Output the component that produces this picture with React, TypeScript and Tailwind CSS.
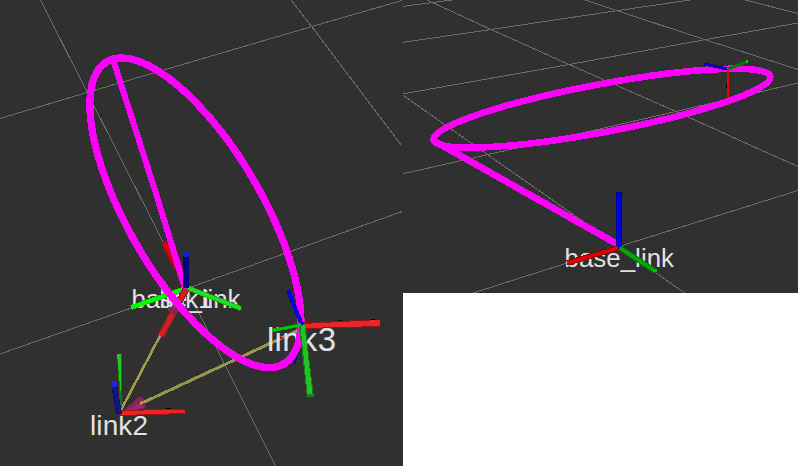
type TubeProps = {
  from: [number, number];
  to: [number, number];
  width: number;
  color: string;
  edge: string;
};

const GRID = '#6c6c6c';
const PATH = '#ff00ff';
const FONT = '"Liberation Sans", Arial, sans-serif';

function Tube({ from, to, width, color, edge }: TubeProps) {
  const line = { x1: from[0], y1: from[1], x2: to[0], y2: to[1] };
  return (
    <g>
      <line {...line} stroke={edge} strokeWidth={width} />
      <line {...line} stroke={color} strokeWidth={width * 0.62} />
    </g>
  );
}

function Label({ x, y, size, length, children }: { x: number; y: number; size: number; length: number; children: string }) {
  return (
    <text x={x} y={y} fontSize={size} textLength={length} fontFamily={FONT} fill="#e2e2e2">
      {children}
    </text>
  );
}

function TopView() {
  return (
    <svg className="block" width="403" height="466" viewBox="0 0 403 466" shapeRendering="crispEdges" fill="none">
      <g stroke={GRID}>
        <path d="M40.500 0L87 92L187 289L275.500 466" />
        <path d="M0 118.500L87 92.500L312 26.500L402 0.500" />
        <path d="M291 0L312 27L401.500 145.500" />
        <path d="M0 354L187 288.500L402 211.500" />
      </g>

      <path d="M160.500 335L121 410" stroke="#9c9c4a" strokeWidth="2.600" />
      <path d="M140 404L301 329" stroke="#96964a" strokeWidth="3" />
      <path d="M122 412L139 397L144 398L146 407L142 409Z" fill="#8c2259" />
      <path d="M122 412L142 403L144 408Z" fill="#a0286a" />
      <path d="M140 403.500L152 398" stroke="#a0a04a" strokeWidth="2.500" />

      <Label x={131.500} y={307.500} size={25.800} length={109}>base_link</Label>
      <Label x={159.500} y={307.500} size={25.800} length={53}>link1</Label>
      <Label x={267} y={351} size={33} length={69}>link3</Label>
      <Label x={90} y={435} size={28} length={58}>link2</Label>

      <Tube from={[302, 328]} to={[293, 364]} width={5} color="#1a1a99" edge="#101080" />
      <path d="M280 337l3 2" stroke="#b01818" strokeWidth="2" />

      <Tube from={[131, 307.500]} to={[184, 289]} width={5} color="#00ff00" edge="#00dc00" />
      <Tube from={[188, 288]} to={[241, 308.500]} width={5} color="#24e024" edge="#1cb41c" />
      <Tube from={[186, 289]} to={[161, 336]} width={7} color="#cc2222" edge="#a41c1c" />
      <path d="M168 307l12 1l-2 5l-6 2l-4-4Z" fill="#8c2259" />

      <path d="M164 242L185 288" stroke="#780000" strokeWidth="3" />
      <path d="M161.500 243L166 241L180 270L184 284L174 268Z" fill="#d20000" />

      <circle
        r="1"
        transform="matrix(105.6 108.2 0 110.8 195.4 212.8)"
        stroke={PATH}
        strokeWidth="7.300"
        vectorEffect="non-scaling-stroke"
      />
      <path d="M110 60L116.500 60L159 193L187.500 285L185 290L181 286L153 194Z" fill={PATH} />

      <path d="M186 288V253" stroke="#00006a" strokeWidth="6" />
      <path d="M186.500 288V255" stroke="#000090" strokeWidth="3" />
      <circle cx="186" cy="254" r="3" fill="#1c1cd8" />

      <path d="M302 322L380 319.500V327L302 329Z" fill="#921414" />
      <path d="M302 324L380 320V326L302 328Z" fill="#e62828" />
      <path d="M338 320h3M371 319.500h4" stroke="#000" />
      <Tube from={[302, 325]} to={[288, 290.500]} width={4} color="#0000ff" edge="#0000b4" />
      <Tube from={[301, 325]} to={[272, 330.500]} width={3.500} color="#00c800" edge="#009a00" />
      <path d="M299 326L305 324L314 397L307 397Z" fill="#188018" />
      <path d="M300.500 326L304.500 325L312.500 394L307.500 394Z" fill="#22c422" />

      <path d="M117 354H122.500L122 408L120 408Z" fill="#117811" />
      <path d="M117 354H121L121.500 402Z" fill="#22c822" />
      <path d="M121 410L184 408.500L185 414L120 416Z" fill="#a01414" />
      <path d="M123 411L184.500 409.500V413L121 415Z" fill="#ee2222" />
      <path d="M166 408.500h5" stroke="#000" />
      <path d="M114 384L119 414" stroke="#10106c" strokeWidth="6" />
      <path d="M114 384L119 413" stroke="#151594" strokeWidth="3" />
      <circle cx="114" cy="384" r="3.200" fill="#2222dc" />
    </svg>
  );
}

function SideView() {
  return (
    <svg className="block" width="395" height="293" viewBox="403 0 395 293" shapeRendering="crispEdges" fill="none">
      <g stroke={GRID}>
        <path d="M402 6.500L452 0" />
        <path d="M402 42.500L491 29.500L598 13.500L690 0" />
        <path d="M402 94L569 64.500L706 39.500L798 23" />
        <path d="M402 174L508 150L676 111.500L798 83" />
        <path d="M473 293L619 246.500L798 190.500" />
        <path d="M427 0L491 29.500L569 64.500L676 111.500L761 150L798 166.500" />
        <path d="M402 94.500L488 155L619 246.500L684.500 293" />
        <path d="M585 0L618 11L706 40L798 69.500" />
        <path d="M745 0L798 13.500" />
      </g>

      <Label x={564.500} y={267} size={25.800} length={109.500}>base_link</Label>

      <circle
        r="1"
        transform="matrix(168.5 -31 0 24.4 602 108.2)"
        stroke={PATH}
        strokeWidth="6.600"
        vectorEffect="non-scaling-stroke"
      />
      <path d="M436 142L617 244" stroke={PATH} strokeWidth="6.800" />

      <path d="M619 247V192" stroke="#00009a" strokeWidth="6" />
      <path d="M619 247V194" stroke="#0000e6" strokeWidth="4" />
      <Tube from={[618, 248]} to={[567, 263]} width={5.500} color="#dc0000" edge="#900000" />
      <Tube from={[620, 248]} to={[655, 271]} width={5.500} color="#00a800" edge="#007400" />
      <path d="M653 269h4v3h-4z" fill="#00c000" />

      <path d="M726.500 84V88" stroke="#000" strokeWidth="1" />
      <path d="M728 69V97" stroke="#ee0000" strokeWidth="2" />
      <path d="M728 69L746 62" stroke="#007800" strokeWidth="3" />
      <path d="M746 60h2v3h-2z" fill="#00dc00" />
      <Tube from={[704, 64]} to={[727, 69]} width={3} color="#0000cc" edge="#000080" />
    </svg>
  );
}

export default function App() {
  return (
    <main className="flex h-[466px] w-[798px] items-start overflow-hidden bg-white">
      <section className="h-[466px] w-[403px] shrink-0 bg-[#303030]">
        <TopView />
      </section>
      <section className="h-[293px] w-[395px] shrink-0 bg-[#303030]">
        <SideView />
      </section>
    </main>
  );
}
